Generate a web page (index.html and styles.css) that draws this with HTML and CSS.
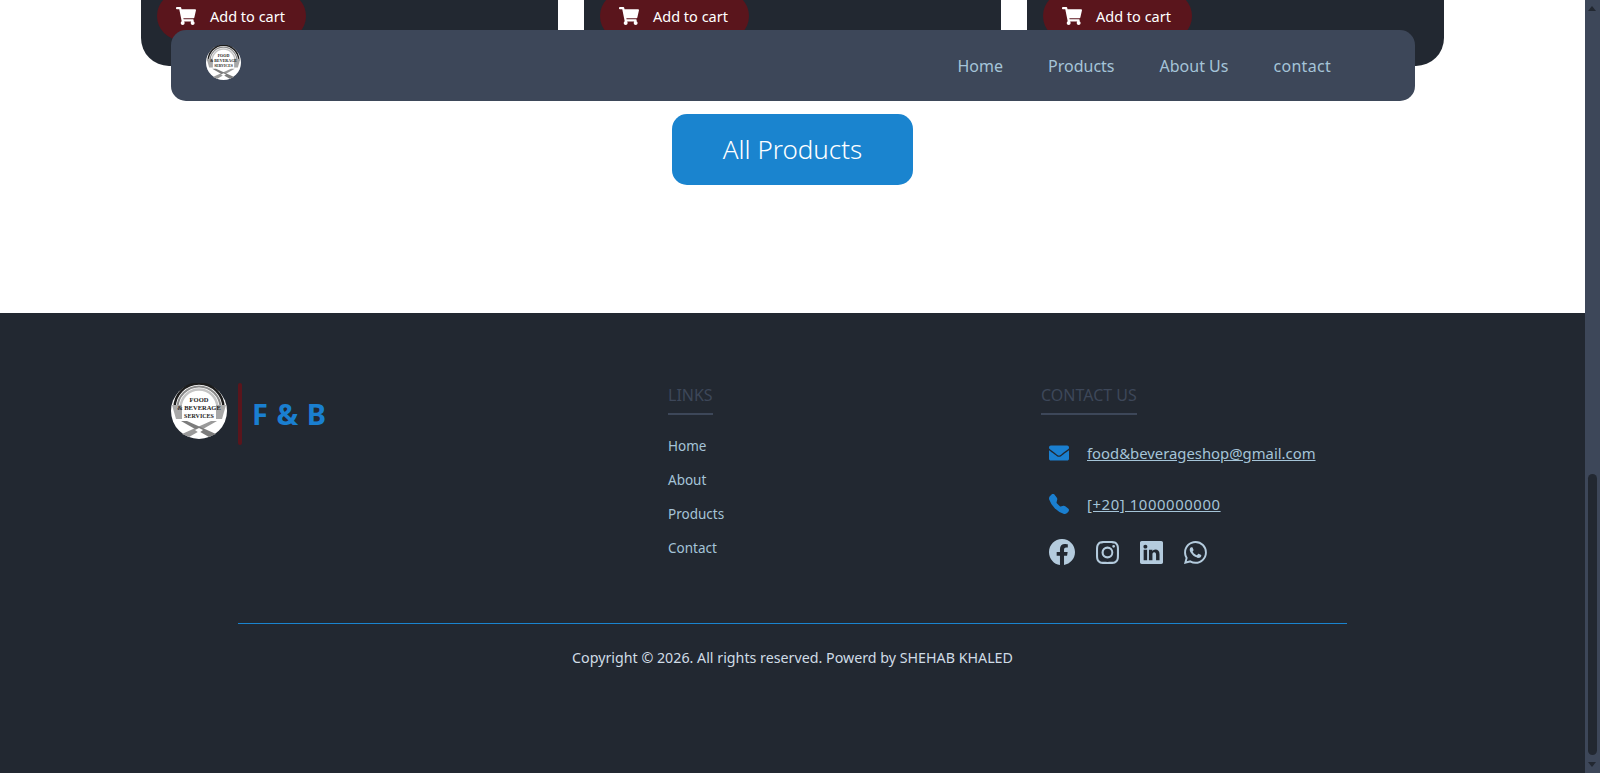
FILE: index.html
```html
<!DOCTYPE html>
<html lang="en">

<head>
    <meta charset="UTF-8">
    <meta name="viewport" content="width=device-width, initial-scale=1.0">
    <title>F &amp; B</title>
    <link rel="stylesheet" href="styles.css">
</head>

<body>
    <div class="page">
        <main class="content">
            <nav class="navbar">
                <svg class="nav-logo" viewBox="0 0 56 56">
                    <use href="#logo"></use>
                </svg>
                <ul class="nav-links">
                    <li><a href="#">Home</a></li>
                    <li><a href="#">Products</a></li>
                    <li><a href="#">About Us</a></li>
                    <li><a href="#">contact</a></li>
                </ul>
            </nav>

            <section class="products">
                <div class="product-card">
                    <button class="cart-btn">
                        <svg class="cart-icon" viewBox="0 0 576 512"><use href="#cart"></use></svg>
                        Add to cart
                    </button>
                </div>
                <div class="product-card">
                    <button class="cart-btn">
                        <svg class="cart-icon" viewBox="0 0 576 512"><use href="#cart"></use></svg>
                        Add to cart
                    </button>
                </div>
                <div class="product-card">
                    <button class="cart-btn">
                        <svg class="cart-icon" viewBox="0 0 576 512"><use href="#cart"></use></svg>
                        Add to cart
                    </button>
                </div>
            </section>

            <div class="all-products">
                <a class="all-products-btn" href="#">All Products</a>
            </div>

            <footer class="footer">
                <div class="footer-cols">
                    <div class="footer-brand">
                        <svg class="footer-logo" viewBox="0 0 56 56">
                            <use href="#logo"></use>
                        </svg>
                        <span class="brand-bar"></span>
                        <span class="brand-name">F &amp; B</span>
                    </div>
                    <div class="footer-links">
                        <h4 class="footer-title">LINKS</h4>
                        <ul>
                            <li><a href="#">Home</a></li>
                            <li><a href="#">About</a></li>
                            <li><a href="#">Products</a></li>
                            <li><a href="#">Contact</a></li>
                        </ul>
                    </div>
                    <div class="footer-contact">
                        <h4 class="footer-title">CONTACT US</h4>
                        <div class="contact-row contact-mail">
                            <svg class="contact-icon" viewBox="0 0 512 512">
                                <path d="M502.3 190.8c3.9-3.1 9.7-.2 9.7 4.7V400c0 26.5-21.5 48-48 48H48c-26.5 0-48-21.5-48-48V195.6c0-5 5.7-7.8 9.7-4.7 22.4 17.4 52.1 39.5 154.1 113.6 21.1 15.4 56.7 47.8 92.2 47.6 35.7.3 72-32.8 92.3-47.6 102-74.1 131.6-96.3 154-113.7zM256 320c23.2.4 56.6-29.2 73.4-41.4 132.7-96.3 142.8-104.7 173.4-128.7 5.8-4.5 9.2-11.5 9.2-18.9v-19c0-26.5-21.5-48-48-48H48C21.5 64 0 85.5 0 112v19c0 7.4 3.4 14.3 9.2 18.9 30.6 23.9 40.7 32.4 173.4 128.7 16.8 12.2 50.2 41.8 73.4 41.4z"></path>
                            </svg>
                            <a href="#">food&amp;beverageshop@gmail.com</a>
                        </div>
                        <div class="contact-row contact-phone">
                            <svg class="contact-icon" viewBox="0 0 16 16">
                                <path d="M1.885.511a1.745 1.745 0 0 1 2.61.163L6.29 2.98c.329.423.445.974.315 1.494l-.547 2.19a.678.678 0 0 0 .178.643l2.457 2.457a.678.678 0 0 0 .644.178l2.189-.547a1.745 1.745 0 0 1 1.494.315l2.306 1.794c.829.645.905 1.87.163 2.611l-1.034 1.034c-.74.74-1.846 1.065-2.877.702a18.634 18.634 0 0 1-7.01-4.42 18.634 18.634 0 0 1-4.42-7.009c-.362-1.03-.037-2.137.703-2.877L1.885.511z"></path>
                            </svg>
                            <a href="#">[+20] 1000000000</a>
                        </div>
                        <div class="socials">
                            <svg class="social-icon social-fb" viewBox="0 0 16 16">
                                <path d="M16 8.049c0-4.446-3.582-8.05-8-8.05C3.58 0-.002 3.603-.002 8.05c0 4.017 2.926 7.347 6.75 7.951v-5.625h-2.03V8.05H6.75V6.275c0-2.017 1.195-3.131 3.022-3.131.876 0 1.791.157 1.791.157v1.98h-1.009c-.993 0-1.303.621-1.303 1.258v1.51h2.218l-.354 2.326H9.25V16c3.824-.604 6.75-3.934 6.75-7.951z"></path>
                            </svg>
                            <svg class="social-icon" viewBox="0 0 16 16">
                                <path d="M8 0C5.829 0 5.556.01 4.703.048 3.85.088 3.269.222 2.76.42a3.917 3.917 0 0 0-1.417.923A3.927 3.927 0 0 0 .42 2.76C.222 3.268.087 3.85.048 4.7.01 5.555 0 5.827 0 8.001c0 2.172.01 2.444.048 3.297.04.852.174 1.433.372 1.942.205.526.478.972.923 1.417.444.445.89.719 1.416.923.51.198 1.09.333 1.942.372C5.555 15.99 5.827 16 8 16s2.444-.01 3.298-.048c.851-.04 1.434-.174 1.943-.372a3.916 3.916 0 0 0 1.416-.923c.445-.445.718-.891.923-1.417.197-.509.332-1.09.372-1.942C15.99 10.445 16 10.173 16 8s-.01-2.445-.048-3.299c-.04-.851-.175-1.433-.372-1.941a3.926 3.926 0 0 0-.923-1.417A3.911 3.911 0 0 0 13.24.42c-.51-.198-1.092-.333-1.943-.372C10.443.01 10.172 0 7.998 0h.003zm-.717 1.442h.718c2.136 0 2.389.007 3.232.046.78.035 1.204.166 1.486.275.373.145.64.319.92.599.28.28.453.546.598.92.11.281.24.705.275 1.485.039.843.047 1.096.047 3.231s-.008 2.389-.047 3.232c-.035.78-.166 1.203-.275 1.485a2.47 2.47 0 0 1-.599.919c-.28.28-.546.453-.92.598-.28.11-.704.24-1.485.276-.843.038-1.096.047-3.232.047s-2.39-.009-3.233-.047c-.78-.036-1.203-.166-1.485-.276a2.478 2.478 0 0 1-.92-.598 2.48 2.48 0 0 1-.6-.92c-.109-.281-.24-.705-.275-1.485-.038-.843-.046-1.096-.046-3.233 0-2.136.008-2.388.046-3.231.036-.78.166-1.204.276-1.486.145-.373.319-.64.599-.92.28-.28.546-.453.92-.598.282-.11.705-.24 1.485-.276.738-.034 1.024-.044 2.515-.045v.002zm4.988 1.328a.96.96 0 1 0 0 1.92.96.96 0 0 0 0-1.92zm-4.27 1.122a4.109 4.109 0 1 0 0 8.217 4.109 4.109 0 0 0 0-8.217zm0 1.441a2.667 2.667 0 1 1 0 5.334 2.667 2.667 0 0 1 0-5.334z"></path>
                            </svg>
                            <svg class="social-icon" viewBox="0 0 16 16">
                                <path d="M0 1.146C0 .513.526 0 1.175 0h13.65C15.474 0 16 .513 16 1.146v13.708c0 .633-.526 1.146-1.175 1.146H1.175C.526 16 0 15.487 0 14.854V1.146zm4.943 12.248V6.169H2.542v7.225h2.401zm-1.2-8.212c.837 0 1.358-.554 1.358-1.248-.015-.709-.52-1.248-1.342-1.248-.822 0-1.359.54-1.359 1.248 0 .694.521 1.248 1.327 1.248h.016zm4.908 8.212V9.359c0-.216.016-.432.08-.586.173-.431.568-.878 1.232-.878.869 0 1.216.662 1.216 1.634v3.865h2.401V9.25c0-2.22-1.184-3.252-2.764-3.252-1.274 0-1.845.7-2.165 1.193v.025h-.016a5.54 5.54 0 0 1 .016-.025V6.169h-2.4c.03.678 0 7.225 0 7.225h2.4z"></path>
                            </svg>
                            <svg class="social-icon" viewBox="0 0 16 16">
                                <path d="M13.601 2.326A7.854 7.854 0 0 0 7.994 0C3.627 0 .068 3.558.064 7.926c0 1.399.366 2.76 1.057 3.965L0 16l4.204-1.102a7.933 7.933 0 0 0 3.79.965h.004c4.368 0 7.926-3.558 7.93-7.93A7.898 7.898 0 0 0 13.6 2.326zM7.994 14.521a6.573 6.573 0 0 1-3.356-.92l-.24-.144-2.494.654.666-2.433-.156-.251a6.56 6.56 0 0 1-1.007-3.505c0-3.626 2.957-6.584 6.591-6.584a6.56 6.56 0 0 1 4.66 1.931 6.557 6.557 0 0 1 1.928 4.66c-.004 3.639-2.961 6.592-6.592 6.592zm3.615-4.934c-.197-.099-1.17-.578-1.353-.646-.182-.065-.315-.099-.445.099-.133.197-.513.646-.627.775-.114.133-.232.148-.43.05-.197-.1-.836-.308-1.592-.985-.59-.525-.985-1.175-1.103-1.372-.114-.198-.011-.304.088-.403.087-.088.197-.232.296-.346.1-.114.133-.198.198-.33.065-.134.034-.248-.015-.347-.05-.099-.445-1.076-.612-1.47-.16-.389-.323-.335-.445-.34-.114-.007-.247-.007-.38-.007a.729.729 0 0 0-.529.247c-.182.198-.691.677-.691 1.654 0 .977.71 1.916.81 2.049.098.133 1.394 2.132 3.383 2.992.47.205.84.326 1.129.418.475.152.904.129 1.246.08.38-.058 1.171-.48 1.338-.943.164-.464.164-.86.114-.943-.049-.084-.182-.133-.38-.232z"></path>
                            </svg>
                        </div>
                    </div>
                </div>
                <div class="copyright">
                    <p>Copyright © 2026. All rights reserved. Powerd by SHEHAB KHALED</p>
                </div>
            </footer>
        </main>

        <div class="scrollbar">
            <span class="arrow-up"></span>
            <span class="thumb"></span>
            <span class="arrow-down"></span>
        </div>
    </div>

    <svg class="defs" width="0" height="0">
        <defs>
            <path id="cart" d="M528.12 301.319l47.273-208C578.806 78.301 567.391 64 551.99 64H159.208l-9.166-44.81C147.758 8.021 137.93 0 126.529 0H24C10.745 0 0 10.745 0 24v16c0 13.255 10.745 24 24 24h69.883l70.248 343.435C147.325 417.1 136 435.222 136 456c0 30.928 25.072 56 56 56s56-25.072 56-56c0-15.674-6.447-29.835-16.824-40h209.647C430.447 426.165 424 440.326 424 456c0 30.928 25.072 56 56 56s56-25.072 56-56c0-22.172-12.888-41.332-31.579-50.405l5.517-24.276c3.413-15.018-8.002-29.319-23.403-29.319H218.117l-6.545-32h293.145c11.206 0 20.92-7.754 23.403-18.681z"></path>
            <g id="logo">
                <circle cx="28" cy="28" r="28" fill="#ffffff"></circle>
                <path d="M3.5 25A24.5 24.5 0 0 1 52.5 25" fill="none" stroke="#1c1c1c" stroke-width="2.5"></path>
                <path d="M6.5 25A21.5 21.5 0 0 1 49.5 25" fill="none" stroke="#8a8a8a" stroke-width="2"></path>
                <path d="M9.5 25A18.5 18.5 0 0 1 46.5 25" fill="none" stroke="#c4c4c4" stroke-width="2.5"></path>
                <path d="M1 22H11V36H5z" fill="#a8a8a8"></path>
                <path d="M55 22H45V36H51z" fill="#a8a8a8"></path>
                <path d="M11 51L40 38H46L18 54z" fill="#9a9a9a"></path>
                <path d="M45 51L16 38H10L38 54z" fill="#7c7c7c"></path>
                <path d="M24 47L28 45L32 47L28 50z" fill="#ffffff"></path>
                <text x="28" y="19" font-size="6.5" font-weight="700" text-anchor="middle" font-family="Liberation Serif, serif" fill="#222222">FOOD</text>
                <text x="28" y="27" font-size="6.5" font-weight="700" text-anchor="middle" font-family="Liberation Serif, serif" fill="#222222">&amp; BEVERAGE</text>
                <text x="28" y="35" font-size="6" font-weight="700" text-anchor="middle" font-family="Liberation Serif, serif" fill="#222222">SERVICES</text>
            </g>
        </defs>
    </svg>
</body>

</html>
```

FILE: styles.css
```css
* {
    box-sizing: border-box;
}

body {
    margin: 0;
    padding: 0;
    font-family: 'Noto Sans', sans-serif;
    background-color: #ffffff;
    overflow: hidden;
}

a {
    color: inherit;
}

ul {
    list-style: none;
    margin: 0;
    padding: 0;
}

.page {
    display: flex;
    height: 773px;
}

.content {
    position: relative;
    flex: 1;
    display: flex;
    flex-direction: column;
}

.navbar {
    position: absolute;
    top: 30px;
    left: 171px;
    width: 1244px;
    height: 71px;
    display: flex;
    align-items: center;
    justify-content: space-between;
    padding: 0 84px 0 35px;
    background-color: #3d4759;
    border-radius: 15px;
}

.nav-logo {
    width: 35px;
    height: 35px;
    margin-top: -6px;
}

.nav-links {
    display: flex;
    gap: 45px;
}

.nav-links a {
    color: #a5c4d8;
    font-size: 16px;
    text-decoration: none;
}

.nav-links li:last-child {
    letter-spacing: 0.3px;
}

.products {
    display: grid;
    grid-template-columns: repeat(3, 417px);
    gap: 26px;
    margin-left: 141px;
    height: 66px;
}

.product-card {
    padding: 0 16px;
    background-color: #222831;
    border-radius: 0 0 28px 28px;
}

.cart-btn {
    display: flex;
    align-items: center;
    gap: 14px;
    width: 149px;
    height: 48px;
    margin-top: -8px;
    padding: 0 19px;
    border: none;
    border-radius: 24px;
    background-color: #5a151c;
    color: #ffffff;
    font-family: inherit;
    font-size: 14.5px;
    white-space: nowrap;
}

.cart-icon {
    flex-shrink: 0;
    width: 20px;
    height: 18px;
    fill: #ffffff;
}

.all-products {
    display: flex;
    justify-content: center;
    height: 247px;
    padding-top: 48px;
}

.all-products-btn {
    display: flex;
    align-items: center;
    justify-content: center;
    width: 241px;
    height: 71px;
    padding-bottom: 2px;
    background-color: #1a84cf;
    border-radius: 15px;
    color: #ffffff;
    font-size: 26px;
    font-weight: 300;
    text-decoration: none;
}

.footer {
    flex: 1;
    padding: 71px 0 0;
    background-color: #222831;
}

.footer-cols {
    display: grid;
    grid-template-columns: 497px 373px 1fr;
    height: 239px;
    padding-left: 171px;
}

.footer-brand {
    display: flex;
    align-items: flex-start;
    margin-top: -1px;
}

.footer-logo {
    width: 56px;
    height: 56px;
}

.brand-bar {
    width: 4px;
    height: 62px;
    margin: 0 9px 0 11px;
    background-color: #5a151c;
    border-radius: 2px;
}

.brand-name {
    margin-top: 10px;
    margin-left: 1px;
    color: #1a7fd0;
    font-size: 29px;
    font-weight: 700;
    line-height: 41px;
    word-spacing: 1px;
}

.footer-title {
    display: inline-block;
    margin: 0;
    padding-bottom: 7px;
    border-bottom: 2px solid #3d4759;
    color: #3d4759;
    font-size: 16px;
    font-weight: 400;
}

.footer-links ul {
    display: flex;
    flex-direction: column;
    gap: 15px;
    margin-top: 22px;
}

.footer-links a {
    display: block;
    color: #a5c4d8;
    font-size: 13.5px;
    line-height: 19px;
    text-decoration: none;
}

.contact-row {
    display: flex;
    align-items: center;
    gap: 18px;
    padding-left: 8px;
    height: 22px;
    color: #a5c4d8;
    font-size: 14.85px;
}

.contact-mail {
    margin-top: 27px;
}

.contact-phone {
    margin-top: 29px;
    letter-spacing: 0.6px;
}

.contact-icon {
    width: 20px;
    height: 20px;
    fill: #1a7fd0;
}

.socials {
    display: flex;
    align-items: center;
    gap: 21px;
    margin-top: 24px;
    padding-left: 8px;
}

.social-icon {
    width: 23px;
    height: 23px;
    fill: #b4cbdd;
}

.social-fb {
    width: 26px;
    height: 26px;
}

.copyright {
    margin: 0 238px;
    border-top: 1px solid #1a84cf;
    text-align: center;
}

.copyright p {
    margin: 24px 0 0;
    color: #d0dce6;
    font-size: 14.25px;
}

/* scrollbar of the page */
.scrollbar {
    position: relative;
    width: 15px;
    background-color: #3d4759;
}

.arrow-up,
.arrow-down {
    position: absolute;
    left: 3px;
    width: 0;
    height: 0;
    border-left: 4.5px solid transparent;
    border-right: 4.5px solid transparent;
}

.arrow-up {
    top: 6px;
    border-bottom: 5px solid #222831;
}

.arrow-down {
    bottom: 6px;
    border-top: 5px solid #222831;
}

.thumb {
    position: absolute;
    top: 474px;
    left: 3px;
    width: 9px;
    height: 281px;
    background-color: #222831;
    border-radius: 5px;
}

.defs {
    position: absolute;
}
```
